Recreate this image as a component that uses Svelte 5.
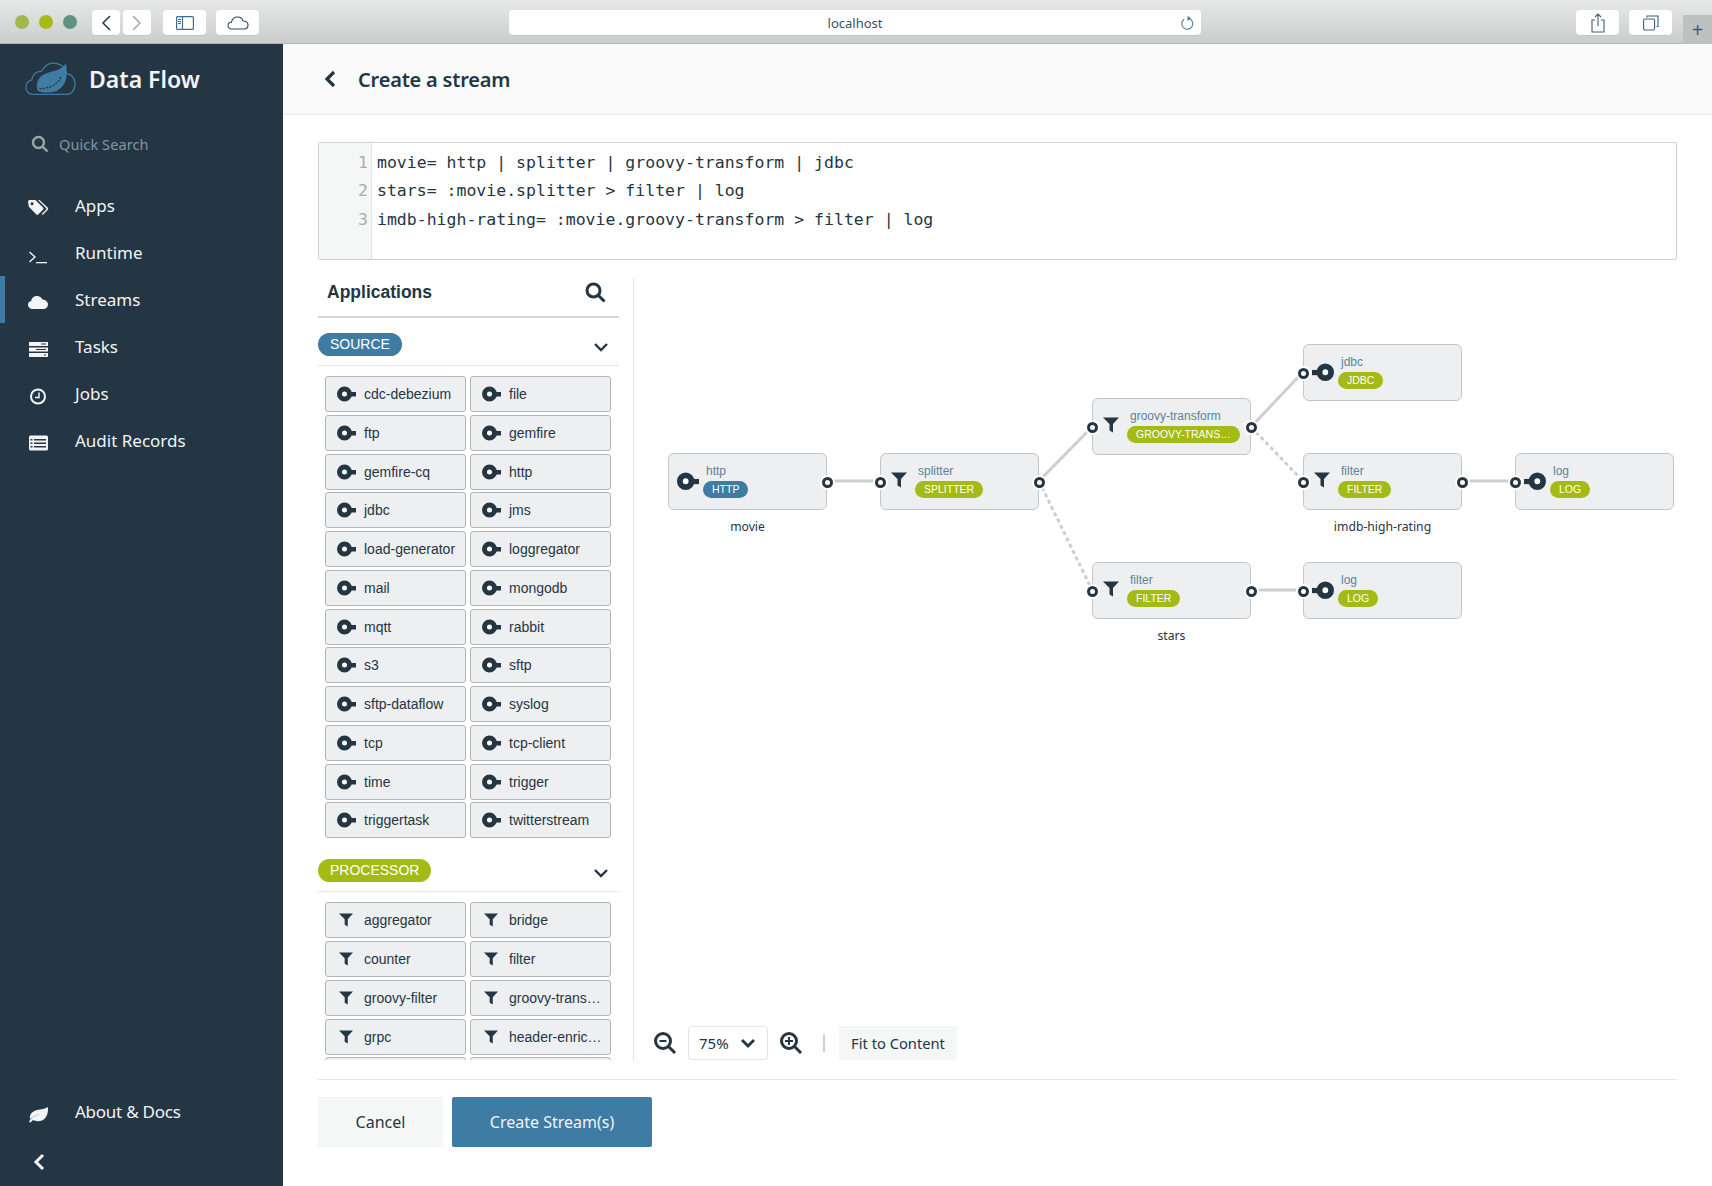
<script lang="ts">
  const navItems = [
    { label: 'Apps', icon: 'tags' },
    { label: 'Runtime', icon: 'term' },
    { label: 'Streams', icon: 'cloud', active: true },
    { label: 'Tasks', icon: 'tasks' },
    { label: 'Jobs', icon: 'clock' },
    { label: 'Audit Records', icon: 'list' },
  ];

  const codeLines = [
    'movie= http | splitter | groovy-transform | jdbc',
    'stars= :movie.splitter > filter | log',
    'imdb-high-rating= :movie.groovy-transform > filter | log',
  ];

  const sources = [
    'cdc-debezium', 'file', 'ftp', 'gemfire', 'gemfire-cq', 'http', 'jdbc', 'jms',
    'load-generator', 'loggregator', 'mail', 'mongodb', 'mqtt', 'rabbit', 's3', 'sftp',
    'sftp-dataflow', 'syslog', 'tcp', 'tcp-client', 'time', 'trigger', 'triggertask', 'twitterstream',
  ];
  const processors = [
    'aggregator', 'bridge', 'counter', 'filter', 'groovy-filter', 'groovy-trans…',
    'grpc', 'header-enric…',
  ];

  // canvas starts at 634,278 in the page
  const nodes = [
    { x: 34, y: 175, name: 'http', tag: 'HTTP', kind: 'source', label: 'movie' },
    { x: 246, y: 175, name: 'splitter', tag: 'SPLITTER', kind: 'processor' },
    { x: 458, y: 120, name: 'groovy-transform', tag: 'GROOVY-TRANS…', kind: 'processor' },
    { x: 669, y: 66, name: 'jdbc', tag: 'JDBC', kind: 'sink' },
    { x: 669, y: 175, name: 'filter', tag: 'FILTER', kind: 'processor', label: 'imdb-high-rating' },
    { x: 881, y: 175, name: 'log', tag: 'LOG', kind: 'sink' },
    { x: 458, y: 284, name: 'filter', tag: 'FILTER', kind: 'processor', label: 'stars' },
    { x: 669, y: 284, name: 'log', tag: 'LOG', kind: 'sink' },
  ];

  const links = [
    { a: [193, 203], b: [246, 203] },
    { a: [405, 203], b: [458, 149] },
    { a: [405, 203], b: [458, 312], dashed: true },
    { a: [617, 149], b: [669, 94] },
    { a: [617, 149], b: [669, 203], dashed: true },
    { a: [828, 203], b: [881, 203] },
    { a: [617, 312], b: [669, 312] },
  ];
</script>

{#snippet sourceIcon(w = 19)}
  <svg width={w} height={w * 16 / 19} viewBox="0 0 19 16">
    <circle cx="7.500" cy="8" r="5" fill="#fff" stroke="#243643" stroke-width="5" />
    <rect x="12" y="6" width="7" height="4.500" fill="#243643" />
  </svg>
{/snippet}

{#snippet sinkIcon(w = 22)}
  <svg width={w} height={w * 16 / 19} viewBox="0 0 19 16">
    <circle cx="11.500" cy="8" r="5" fill="#fff" stroke="#243643" stroke-width="5" />
    <rect x="0" y="6" width="7" height="4.500" fill="#243643" />
  </svg>
{/snippet}

{#snippet filterIcon(w = 16)}
  <svg width={w} height={w} viewBox="0 0 16 16">
    <path d="M0 .5h16L10 7v8.500L6.500 13.500V7z" fill="#243643" />
  </svg>
{/snippet}

{#snippet navIcon(name: string)}
  <svg width="22" height="22" viewBox="0 0 22 22" fill="#f2f4f5">
    {#if name === 'tags'}
      <path d="M1 4.500 2 3h6.500L16 10.500a1.500 1.500 0 0 1 0 2.200l-4.600 4.600a1.500 1.500 0 0 1-2.200 0L1.800 9.800zM5 5.200a1.500 1.500 0 1 0 .1 0z" fill-rule="evenodd" />
      <path d="M11 3h1.600l8 7.600c.8.8.8 1.600 0 2.400l-4.800 5-1-1 4.400-4.600c.4-.5.4-.8 0-1.200z" />
    {:else if name === 'term'}
      <path d="M2.500 8l5.500 5-5.500 5" fill="none" stroke="#f2f4f5" stroke-width="1.400" />
      <rect x="9" y="18" width="11" height="1.300" />
    {:else if name === 'cloud'}
      <path d="M5.500 18C3 18 1 16.200 1 14c0-2 1.300-3.500 3.200-3.900C4.500 7 7 5 10 5c2.500 0 4.500 1.400 5.400 3.500 2.900 0 5.600 2.300 5.600 5 0 2.500-2 4.500-4.700 4.500z" />
    {:else if name === 'tasks'}
      <rect x="2" y="4" width="19" height="4" /><rect x="2" y="9.500" width="19" height="4" /><rect x="2" y="15" width="19" height="4" />
      <rect x="14" y="5.500" width="5" height="1" fill="#243643" /><rect x="9" y="11" width="10" height="1" fill="#243643" /><rect x="17" y="16.500" width="2" height="1" fill="#243643" />
    {:else if name === 'clock'}
      <circle cx="11" cy="11.500" r="7" fill="none" stroke="#f2f4f5" stroke-width="2" />
      <path d="M12 7.500v5H8" fill="none" stroke="#f2f4f5" stroke-width="1.500" />
    {:else if name === 'list'}
      <rect x="2" y="3.500" width="19" height="15" rx="1.500" />
      <g fill="#243643">
        <rect x="3.500" y="7" width="2" height="1.500" /><rect x="7" y="7" width="12" height="1.500" />
        <rect x="3.500" y="10.500" width="2" height="1.500" /><rect x="7" y="10.500" width="12" height="1.500" />
        <rect x="3.500" y="14" width="2" height="1.500" /><rect x="7" y="14" width="12" height="1.500" />
      </g>
    {:else if name === 'leaf'}
      <path d="M2 19c2-5 7-7 12-8-5 .5-9 3-11 5-1-5 3-8 7-9 4-.8 8-.8 11-3 .5 7-2 13-8 14-3 .5-5 0-7-1l-2.500 2.500z" />
    {/if}
  </svg>
{/snippet}

<div class="window">
  <header class="chrome">
    <div class="lights">
      <span class="light l1"></span><span class="light l2"></span><span class="light l3"></span>
    </div>
    <div class="chrome-group">
      <button class="cbtn nav-btn" aria-label="back">
        <svg width="12" height="18" viewBox="0 0 12 18"><path d="M10 2 3 9l7 7" fill="none" stroke="#243643" stroke-width="1.500" /></svg>
      </button>
      <button class="cbtn nav-btn" aria-label="forward">
        <svg width="12" height="18" viewBox="0 0 12 18"><path d="m2 2 7 7-7 7" fill="none" stroke="#a5a8a9" stroke-width="1.500" /></svg>
      </button>
    </div>
    <button class="cbtn wide-btn" aria-label="sidebar">
      <svg width="18" height="14" viewBox="0 0 18 14" fill="none" stroke="#3d6f91" stroke-width="1.200"><rect x=".6" y=".6" width="16.800" height="12.800" rx="1" /><path d="M6.500 .6v12.800" /><path d="M2 3.500h3M2 5.500h3M2 7.500h3" /></svg>
    </button>
    <button class="cbtn wide-btn" aria-label="cloud">
      <svg width="22" height="14" viewBox="0 0 22 14" fill="none" stroke="#2b4a60" stroke-width="1.100"><path d="M5 13C2.500 13 1 11.500 1 9.500S2.500 6.200 4.500 6.200C5 3 7.500 1 10.500 1c3 0 5 2 5.500 4 3 0 5 1.800 5 4s-1.500 4-4 4z" /></svg>
    </button>
    <div class="url-bar">
      <span>localhost</span>
      <svg class="reload" width="14" height="16" viewBox="0 0 14 16" fill="none" stroke="#5f7f95" stroke-width="1.100"><path d="M9 3.500a5.500 5.500 0 1 1-5 .8" /><path d="M7.500 .8 11 3.400 7.500 6z" fill="#3e7ca4" stroke="none" /></svg>
    </div>
    <button class="cbtn side-btn" aria-label="share">
      <svg width="14" height="20" viewBox="0 0 14 20" fill="none" stroke="#3d6078" stroke-width="1.100"><path d="M4 7H1v12h12V7h-3" /><path d="M7 13V1M4 4l3-3 3 3" /></svg>
    </button>
    <button class="cbtn side-btn" aria-label="tabs">
      <svg width="16" height="16" viewBox="0 0 16 16" fill="none" stroke="#3d6078" stroke-width="1.100"><rect x=".6" y="4" width="11" height="11" rx="1.500" /><path d="M4 2.500V1h11v10.500h-1.500" /></svg>
    </button>
    <div class="new-tab">+</div>
  </header>

  <div class="layout">
    <aside class="sidebar">
      <div class="brand">
        <svg width="52" height="36" viewBox="0 0 54 36">
          <path d="M8 34C3.500 34 1 30.500 1 26.500S3.500 20 7 19c1-6 5-9 10-9 3-5 7-8.500 12-8.500 5 0 9 2 12 5l2 6c5 0 9 5 9 10.500S48.500 34 44 34z" fill="none" stroke="#3e7ca4" stroke-width="1.300" />
          <path d="M13 30c-2-7 0-14 7-17C28 9.500 37 10 42.500 2c2 10 1 20-5 25-4 3.500-8 5-14 5-4 0-8 0-10.500-2z" fill="#3e7ca4" />
          <path d="M15 28c7 0 14-2 19-7 2-2 3-4 4-6" fill="none" stroke="#243643" stroke-width="1.400" stroke-dasharray="2 1.500" />
        </svg>
        <span>Data Flow</span>
      </div>
      <div class="quick-search">
        <svg width="18" height="18" viewBox="0 0 18 18" fill="none" stroke="#9aa5ab" stroke-width="2.400"><circle cx="7.500" cy="7.500" r="5.500" /><path d="m11.500 11.500 5 5" /></svg>
        <span>Quick Search</span>
      </div>
      <nav class="nav">
        {#each navItems as item}
          <div class="nav-item" class:active={item.active}>
            <span class="nav-icon">{@render navIcon(item.icon)}</span>
            <span>{item.label}</span>
          </div>
        {/each}
      </nav>
      <div class="side-foot">
        <div class="nav-item about">
          <span class="nav-icon">{@render navIcon('leaf')}</span>
          <span>About &amp; Docs</span>
        </div>
        <svg class="collapse" width="12" height="18" viewBox="0 0 12 18"><path d="M10 2 3 9l7 7" fill="none" stroke="#f2f4f5" stroke-width="3" /></svg>
      </div>
    </aside>

    <main class="main">
      <div class="page-head">
        <svg width="12" height="18" viewBox="0 0 12 18"><path d="M10 2 3 9l7 7" fill="none" stroke="#243643" stroke-width="3.200" /></svg>
        <h1>Create a stream</h1>
      </div>

      <div class="page-body">
        <div class="editor">
          <div class="gutter">
            {#each codeLines as _, i}<div>{i + 1}</div>{/each}
          </div>
          <div class="code">
            {#each codeLines as line}<div>{line}</div>{/each}
          </div>
        </div>

        <div class="workspace">
          <section class="palette">
            <div class="palette-head">
              <h2>Applications</h2>
              <svg width="22" height="22" viewBox="0 0 22 22" fill="none" stroke="#243643" stroke-width="3"><circle cx="9.500" cy="9.500" r="6.500" /><path d="m14.500 14.500 6 6" /></svg>
            </div>
            <div class="group-head">
              <span class="pill pill-blue group-pill">SOURCE</span>
              <svg class="caret" width="16" height="10" viewBox="0 0 16 10"><path d="m2 2 6 6 6-6" fill="none" stroke="#243643" stroke-width="2.400" /></svg>
            </div>
            <div class="app-grid">
              {#each sources as app}
                <div class="app-item"><span class="app-slot">{@render sourceIcon()}</span><span>{app}</span></div>
              {/each}
            </div>
            <div class="group-head">
              <span class="pill pill-green group-pill">PROCESSOR</span>
              <svg class="caret" width="16" height="10" viewBox="0 0 16 10"><path d="m2 2 6 6 6-6" fill="none" stroke="#243643" stroke-width="2.400" /></svg>
            </div>
            <div class="app-grid">
              {#each processors as app}
                <div class="app-item"><span class="app-slot filter-slot">{@render filterIcon(14)}</span><span>{app}</span></div>
              {/each}
              <!-- next row is scrolled out, only its top edge shows -->
              <div class="app-item"></div>
              <div class="app-item"></div>
            </div>
          </section>

          <section class="canvas">
            <svg class="links" width="1050" height="420">
              {#each links as l}
                <line x1={l.a[0]} y1={l.a[1]} x2={l.b[0]} y2={l.b[1]} stroke="#cdcfcf" stroke-width="3" stroke-dasharray={l.dashed ? '4 3' : undefined} />
              {/each}
            </svg>
            {#each nodes as n}
              <div class="node" style="left:{n.x}px;top:{n.y}px">
                {#if n.kind !== 'source'}<span class="port port-in"></span>{/if}
                <span class="node-icon" class:is-filter={n.kind === 'processor'}>
                  {#if n.kind === 'source'}
                    {@render sourceIcon(22)}
                  {:else if n.kind === 'sink'}
                    {@render sinkIcon()}
                  {:else}
                    {@render filterIcon()}
                  {/if}
                </span>
                <div class="node-text">
                  <span class="node-name">{n.name}</span>
                  <span class="pill node-pill" class:pill-blue={n.kind === 'source'} class:pill-green={n.kind !== 'source'}>{n.tag}</span>
                </div>
                {#if n.kind !== 'sink'}<span class="port port-out"></span>{/if}
                {#if n.label}<span class="node-label">{n.label}</span>{/if}
              </div>
            {/each}

            <div class="zoom-bar">
              <svg width="24" height="24" viewBox="0 0 24 24" fill="none" stroke="#243643"><circle cx="10" cy="10" r="7.500" stroke-width="3" /><path d="m15.500 15.500 6.500 6.500" stroke-width="3" /><path d="M6.500 10h7" stroke-width="2" /></svg>
              <div class="zoom-select">
                <span>75%</span>
                <svg width="16" height="10" viewBox="0 0 16 10"><path d="m2 2 6 6 6-6" fill="none" stroke="#243643" stroke-width="2.800" /></svg>
              </div>
              <svg width="24" height="24" viewBox="0 0 24 24" fill="none" stroke="#243643"><circle cx="10" cy="10" r="7.500" stroke-width="3" /><path d="m15.500 15.500 6.500 6.500" stroke-width="3" /><path d="M6 10h8M10 6v8" stroke-width="2" /></svg>
              <span class="zoom-sep"></span>
              <button class="fit-btn">Fit to Content</button>
            </div>
          </section>
        </div>

        <div class="actions">
          <button class="btn btn-cancel">Cancel</button>
          <button class="btn btn-create">Create Stream(s)</button>
        </div>
      </div>
    </main>
  </div>
</div>

<style>
  :global(body) { margin: 0; background: #fff; }
  button { font-family: inherit; border: none; padding: 0; }
  h1, h2 { margin: 0; }

  .window {
    width: 1712px; height: 1186px; overflow: hidden;
    display: flex; flex-direction: column;
    font-family: "Noto Sans", sans-serif; color: #243643;
  }

  .chrome {
    height: 44px; box-sizing: border-box; flex-shrink: 0;
    display: flex; align-items: flex-start; padding-top: 10px; position: relative;
    background: linear-gradient(#e7e9e8, #cbcdcc);
    border-bottom: 1px solid #b4b6b5;
  }
  .lights { display: flex; gap: 10px; margin: 5px 0 0 15px; width: 77px; }
  .light { width: 14px; height: 14px; border-radius: 50%; }
  .l1 { background: #a3b84a; }
  .l2 { background: #a3bb14; }
  .l3 { background: #5e9380; }
  .chrome-group { display: flex; gap: 3px; margin-right: 12px; }
  .cbtn {
    height: 25px; background: #fff; border-radius: 4px;
    display: flex; align-items: center; justify-content: center;
    box-shadow: 0 1px 0 #c4c6c5;
  }
  .nav-btn { width: 28px; }
  .wide-btn { width: 43px; margin-right: 10px; }
  .url-bar {
    width: 692px; height: 25px; margin-left: 240px; margin-right: 375px; background: #fff; border-radius: 4px;
    position: relative; display: flex; align-items: center; justify-content: center;
    font-size: 13px; color: #3a5262; box-shadow: 0 1px 0 #c4c6c5; flex-shrink: 0;
  }
  .reload { position: absolute; right: 7px; top: 5px; }
  .side-btn { width: 43px; margin-right: 10px; flex-shrink: 0; }
  .new-tab {
    position: absolute; right: 0; top: 15px; width: 29px; height: 29px;
    background: #bfc1c0; font: 300 20px/30px "Liberation Sans", sans-serif; text-align: center; color: #3d6078;
  }

  .layout { flex: 1; display: flex; min-height: 0; }

  .sidebar {
    width: 283px; flex-shrink: 0; background: #243643; color: #f2f4f5;
    display: flex; flex-direction: column;
  }
  .brand { display: flex; align-items: center; gap: 12px; padding: 12px 0 0 25px; height: 45px; font-size: 23px; font-weight: 600; }
  .quick-search { display: flex; align-items: center; gap: 10px; margin: 31px 0 0 31px; font-size: 14.5px; letter-spacing: 0.1px; color: #7f97a6; height: 24px; }
  .nav { margin-top: 26px; }
  .nav-item { height: 47px; display: flex; align-items: center; font-size: 17px; padding-left: 27px; gap: 26px; box-sizing: border-box; }
  .nav-item.about { letter-spacing: -0.25px; }
  .nav-item.active { box-shadow: inset 5px 0 0 #3e7ca4; }
  .nav-icon { width: 22px; height: 22px; display: block; margin-top: 5px; }
  .side-foot { margin-top: auto; padding-bottom: 15px; }
  .collapse { display: block; margin: 18px 0 0 33px; }

  .main { flex: 1; min-width: 0; display: flex; flex-direction: column; }
  .page-head {
    height: 71px; box-sizing: border-box; flex-shrink: 0; background: #fafafa; border-bottom: 1px solid #e8e9e9;
    display: flex; align-items: center; gap: 22px; padding-left: 41px;
  }
  .page-head h1 { font-size: 20px; font-weight: 600; letter-spacing: -0.2px; }
  .page-body { flex: 1; padding: 27px 35px 0 35px; display: flex; flex-direction: column; min-height: 0; }

  .editor {
    height: 118px; box-sizing: border-box; display: flex; flex-shrink: 0;
    border: 1px solid #cfd1d1; border-radius: 2px;
    font: 16.5px/28.4px "DejaVu Sans Mono", monospace;
  }
  .gutter { width: 53px; box-sizing: border-box; background: #f5f6f6; border-right: 1px solid #e3e4e4; padding: 6px 3px 0 0; text-align: right; color: #a9adaf; }
  .code { padding: 6px 0 0 5px; white-space: pre; }

  .workspace { height: 782px; margin-top: 18px; display: flex; flex-shrink: 0; }
  .palette {
    width: 301px; height: 782px; overflow: hidden; flex-shrink: 0; padding-right: 14px;
    border-right: 1px solid #e2e3e3;
    font-family: "Liberation Sans", sans-serif;
  }
  .palette-head {
    height: 38px; box-sizing: content-box; display: flex; align-items: flex-start; justify-content: space-between;
    padding: 0 13px 0 9px; border-bottom: 2px solid #d6d7d7;
  }
  .palette-head h2 { font-size: 17.5px; font-weight: 700; line-height: 28px; }
  .palette-head svg { margin-top: 3px; }
  .group-head {
    height: 33px; box-sizing: border-box; display: flex; align-items: flex-start; justify-content: space-between;
    padding-right: 10px; border-bottom: 1px solid #e5e6e6; margin: 15px 0 10px;
  }
  .caret { margin-top: 9px; }
  .app-grid { display: grid; grid-template-columns: 141px 141px; gap: 2.75px 4px; padding: 0 7px; margin-bottom: 21px; }
  .app-item {
    height: 36px; box-sizing: border-box; display: flex; align-items: center;
    background: #eeeff0; border: 1px solid #b1b5b7; border-radius: 3px; font-size: 14px; white-space: nowrap;
  }
  .app-slot { width: 38px; padding-left: 11px; box-sizing: border-box; display: flex; flex-shrink: 0; }
  .filter-slot { padding-left: 13px; }

  .pill { display: inline-block; border-radius: 12px; color: #fff; white-space: nowrap; }
  .pill-blue { background: #3e7ca4; }
  .pill-green { background: #a3bb14; }
  .group-pill { font-size: 14px; line-height: 23px; padding: 0 12px; }

  .canvas { flex: 1; position: relative; font-family: "Liberation Sans", sans-serif; }
  .links { position: absolute; left: 0; top: 0; }
  .node {
    position: absolute; width: 159px; height: 57px; box-sizing: border-box;
    background: #eeeff0; border: 1px solid #c3c5c6; border-radius: 6px;
    display: flex; align-items: center;
  }
  .node-icon { position: absolute; left: 8px; top: 18px; display: flex; }
  .node-icon.is-filter { left: 10px; top: 18px; }
  .node-text { position: absolute; left: 34px; top: 10px; display: flex; flex-direction: column; align-items: flex-start; }
  .node-name { font-size: 12px; line-height: 14px; color: #5f8299; margin-left: 3px; }
  .node-pill { font-size: 10.5px; line-height: 17px; padding: 0 9px; margin-top: 3px; }
  .port {
    position: absolute; top: 22.5px; width: 5px; height: 5px; border: 3px solid #243643; border-radius: 50%;
    background: #fff; box-shadow: 0 0 0 2px #fff;
  }
  .port-in { left: -6.5px; }
  .port-out { right: -6.5px; }
  .node-label {
    position: absolute; left: 0; right: 0; top: 64px; text-align: center;
    font: 12.2px/18px "Noto Sans", sans-serif;
  }

  .zoom-bar {
    position: absolute; left: 19px; top: 748px; height: 34px;
    display: flex; align-items: center; font-family: "Noto Sans", sans-serif;
  }
  .zoom-select {
    width: 80px; height: 34px; box-sizing: border-box; margin: 0 11px 0 11px;
    display: flex; align-items: center; justify-content: space-between; padding: 0 11px 0 10px;
    border: 1px solid #e4e5e5; border-radius: 3px; font-size: 15px;
  }
  .zoom-sep { width: 2px; height: 18px; background: #cfd1d1; margin: 0 14px 0 20px; }
  .fit-btn { width: 118px; height: 34px; background: #f5f6f6; font-size: 14.7px; color: #243643; }

  .actions {
    margin-top: 19px; padding-top: 17px; border-top: 1px solid #e5e6e6;
    display: flex; gap: 9px;
  }
  .btn { height: 50px; font-size: 16px; }
  .btn-cancel { width: 125px; background: #f5f6f6; color: #243643; }
  .btn-create { width: 200px; background: #3e7ca4; color: #f2f4f5; border-radius: 2px; }
</style>
